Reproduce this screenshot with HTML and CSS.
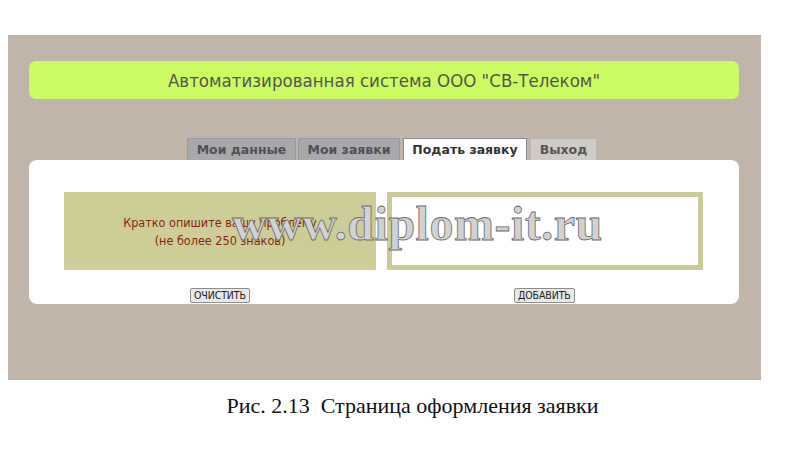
FILE: index.html
```html
<!DOCTYPE html>
<html lang="ru">
<head>
<meta charset="utf-8">
<title>Страница оформления заявки</title>
<link rel="stylesheet" href="styles.css">
</head>
<body>
<div class="shot">
  <div class="header">Автоматизированная система ООО "СВ-Телеком"</div>
  <div class="tabs">
    <div class="tab t1">Мои данные</div>
    <div class="tab t2">Мои заявки</div>
    <div class="tab active">Подать заявку</div>
    <div class="tab t4">Выход</div>
  </div>
  <div class="card">
    <div class="row">
      <div class="col">
        <div class="label">Кратко опишите вашу проблему<br>(не более 250 знаков)</div>
        <div class="btnwrap"><span class="btn">ОЧИСТИТЬ</span></div>
      </div>
      <div class="col">
        <div class="area"></div>
        <div class="btnwrap"><span class="btn">ДОБАВИТЬ</span></div>
      </div>
    </div>
  </div>
  <div class="watermark">www.diplom-it.ru</div>
</div>
<div class="caption">Рис. 2.13&nbsp; Страница оформления заявки</div>
</body>
</html>
```
FILE: styles.css
```css
html, body { margin: 0; padding: 0; background: #fff; }
body { padding: 35px 0 0 8px; width: 801px; height: 425px; overflow: hidden; }

.shot {
  position: relative;
  width: 753px;
  height: 345px;
  background: #c1b5a9;
  padding: 26px 22px 0 21px;
  box-sizing: border-box;
}

.header {
  height: 38px;
  background: #ccfc63;
  border-radius: 7px;
  display: flex;
  align-items: center;
  justify-content: center;
  font-family: "DejaVu Sans Condensed", "DejaVu Sans", sans-serif;
  font-size: 18.5px;
  color: #555550;
}

.tabs {
  display: flex;
  margin: 39px 0 0 158px;
  gap: 2px;
  height: 22px;
}
.tab {
  height: 22px;
  box-sizing: border-box;
  background: #a9a9ab;
  border: 1px solid #9a9aa0;
  border-bottom: none;
  font-family: Verdana, "DejaVu Sans", sans-serif;
  font-weight: bold;
  font-size: 12.5px;
  color: #505058;
  display: flex;
  align-items: center;
  justify-content: center;
}
.t1 { width: 109px; }
.t2 { width: 102px; }
.tab.active { width: 124px; background: #fff; border: 1px solid #8a8a90; border-bottom: none; color: #333; margin-left: 1px; }
.t4 { width: 67px; background: #cfcbc6; color: #555; border-color: #b9b5b0; margin-left: 1px; }

.card {
  background: #fff;
  border-radius: 8px;
  height: 144px;
  padding: 32px 35px 0 35px;
  box-sizing: border-box;
}
.row { display: flex; gap: 11px; }
.col { display: flex; flex-direction: column; }
.col:first-child { width: 312px; }
.col:last-child { width: 316px; }

.label {
  height: 78px;
  background: #cdcd98;
  display: flex;
  align-items: center;
  justify-content: center;
  text-align: center;
  font-family: "DejaVu Sans Condensed", sans-serif;
  font-size: 12.5px;
  line-height: 18px;
  padding-top: 2px;
  box-sizing: border-box;
  color: #8a1f12;
}
.area {
  height: 78px;
  box-sizing: border-box;
  border: 5px solid #cacb98;
  background: #fff;
}

.btnwrap { display: flex; margin-top: 18px; }
.col:first-child .btnwrap { margin-left: 126px; }
.col:last-child .btnwrap { margin-left: 127px; }
.btn {
  display: inline-block;
  height: 15px;
  box-sizing: border-box;
  padding: 0 3px;
  border: 1px solid #8d8d8d;
  border-radius: 2px;
  background: #e8e8e8;
  font-family: "DejaVu Sans Condensed", sans-serif;
  font-size: 10.5px;
  line-height: 13px;
  color: #222;
  letter-spacing: -0.1px;
}

.watermark {
  position: absolute;
  left: 224px;
  top: 161px;
  font-family: "Liberation Serif", "DejaVu Serif", serif;
  font-weight: bold;
  font-size: 48px;
  color: #d2d2d2;
  -webkit-text-stroke: 0.8px #6a6a6a;
  letter-spacing: 0.5px;
}

.caption {
  width: 753px;
  text-align: center;
  margin-top: 13px;
  padding-left: 56px;
  box-sizing: border-box;
  font-family: "Liberation Serif", serif;
  font-size: 22px;
  color: #111;
}
```
